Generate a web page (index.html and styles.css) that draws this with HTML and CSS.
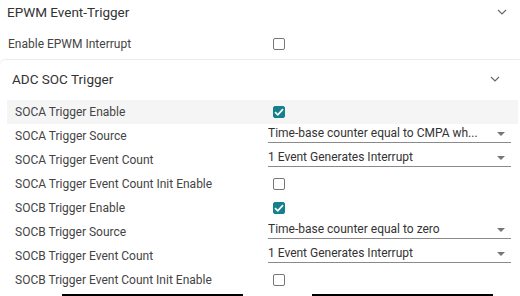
FILE: index.html
```html
<!DOCTYPE html>
<html lang="en">
<head>
	<meta charset="UTF-8">
	<title>EPWM Event-Trigger</title>
	<link rel="stylesheet" href="styles.css">
</head>
<body>
<div class="title">
	<span>EPWM Event-Trigger</span>
	<svg class="chevron" width="10" height="6" viewBox="0 0 10 6"><path d="M1 1 L5 5 L9 1" fill="none" stroke="#6a6a6a" stroke-width="1.2"/></svg>
</div>
<div class="top-row">
	<span class="label">Enable EPWM Interrupt</span>
	<span class="box"></span>
</div>

<div class="panel">
	<div class="panel-head">
		<span>ADC SOC Trigger</span>
		<svg class="chevron" width="10" height="6" viewBox="0 0 10 6"><path d="M1 1 L5 5 L9 1" fill="none" stroke="#6a6a6a" stroke-width="1.2"/></svg>
	</div>
	<div class="rows">
		<div class="row hover">
			<span class="label">SOCA Trigger Enable</span>
			<span class="box checked"><svg width="10" height="8" viewBox="0 0 10 8"><path d="M1 4.2 L3.8 6.8 L9 1.2" fill="none" stroke="#fff" stroke-width="1.7"/></svg></span>
		</div>
		<div class="row">
			<span class="label">SOCA Trigger Source</span>
			<span class="select">Time-base counter equal to CMPA wh...</span>
		</div>
		<div class="row">
			<span class="label">SOCA Trigger Event Count</span>
			<span class="select">1 Event Generates Interrupt</span>
		</div>
		<div class="row">
			<span class="label">SOCA Trigger Event Count Init Enable</span>
			<span class="box"></span>
		</div>
		<div class="row">
			<span class="label">SOCB Trigger Enable</span>
			<span class="box checked"><svg width="10" height="8" viewBox="0 0 10 8"><path d="M1 4.2 L3.8 6.8 L9 1.2" fill="none" stroke="#fff" stroke-width="1.7"/></svg></span>
		</div>
		<div class="row">
			<span class="label">SOCB Trigger Source</span>
			<span class="select">Time-base counter equal to zero</span>
		</div>
		<div class="row">
			<span class="label">SOCB Trigger Event Count</span>
			<span class="select">1 Event Generates Interrupt</span>
		</div>
		<div class="row">
			<span class="label">SOCB Trigger Event Count Init Enable</span>
			<span class="box"></span>
		</div>
	</div>
</div>

<div class="footer">
	<div class="bar"></div>
	<div class="bar"></div>
</div>
</body>
</html>
```

FILE: styles.css
```css
body{
	margin: 0;
	font-family: Roboto, "Liberation Sans", sans-serif;
	color: #333;
	background: #fff;
	overflow: hidden;
}
.title{
	display: flex;
	justify-content: space-between;
	align-items: center;
	height: 24px;
	padding: 0 13px 0 7px;
	font-size: 13.5px;
}
.top-row{
	display: flex;
	align-items: center;
	height: 30px;
	padding: 5px 0 0 8px;
	font-size: 12px;
}
.top-row .label{
	width: 265px;
}
.label{
	color: #444;
}
.box{
	display: flex;
	justify-content: center;
	align-items: center;
	width: 10px;
	height: 10px;
	border: 1.6px solid #777;
	border-radius: 2px;
}
.box.checked{
	background: #14808e;
	border-color: #14808e;
}
.panel{
	border-top: 1px solid #ececec;
	border-top-left-radius: 6px;
	box-shadow: -1px 0 1px rgba(0,0,0,0.04);
}
.panel-head{
	display: flex;
	justify-content: space-between;
	align-items: center;
	height: 37px;
	padding: 0 20px 3px 12px;
	font-size: 13.5px;
}
.rows{
	margin: 0 2px 0 7px;
	font-size: 12px;
}
.row{
	display: flex;
	align-items: center;
	height: 24px;
}
.row .label{
	width: 253px;
	padding-left: 8px;
}
.row .box{
	margin-left: 5px;
}
.hover{
	background: #f5f5f5;
}
.select{
	position: relative;
	align-self: flex-start;
	box-sizing: border-box;
	width: 243px;
	height: 18px;
	margin-top: 1px;
	line-height: 17px;
	border-bottom: 1px solid #8a8a8a;
	font-size: 12px;
	color: #333;
	white-space: nowrap;
}
.select::after{
	content: "";
	position: absolute;
	right: 6px;
	top: 7px;
	border-left: 4px solid transparent;
	border-right: 4px solid transparent;
	border-top: 4px solid #777;
}
.footer{
	display: flex;
	gap: 69px;
	margin: 2px 0 0 62px;
}
.bar{
	width: 181px;
	height: 2px;
	background: #000;
}
```
